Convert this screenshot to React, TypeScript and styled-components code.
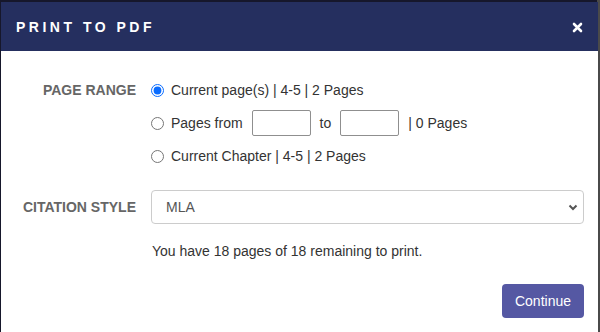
import { FC } from 'react';
import styled, { createGlobalStyle } from 'styled-components';

const GlobalStyle = createGlobalStyle`
    html, body {
        margin: 0;
        padding: 0;
        background: #16172b;
        font-family: 'Liberation Sans', Arial, sans-serif;
        overflow: hidden;
    }
`;

const Backdrop = styled.div`
    height: 332px;
    padding: 2px 3px 0 1px;
    background: linear-gradient(to right, #16172b 0, #16172b 597px, #4a4a4a 597px);
`;

const Modal = styled.div`
    width: 597px;
    height: 340px;
    background: #fff;
    display: flex;
    flex-direction: column;
`;

const Header = styled.div`
    height: 49px;
    background: #252f5f;
    display: flex;
    align-items: center;
    justify-content: space-between;
    padding: 1px 15px 0 15px;
    box-sizing: border-box;
`;

const Title = styled.h2`
    margin: 0;
    color: #fff;
    font-size: 14px;
    font-weight: 700;
    letter-spacing: 3.5px;
`;

const CloseButton = styled.button`
    border: 0;
    background: none;
    padding: 0;
    width: 11px;
    height: 11px;
    display: flex;
    cursor: pointer;
`;

const Body = styled.div`
    padding: 29px 14px 0 0;
    display: flex;
    flex-direction: column;
`;

const FieldRow = styled.div<{ $align?: string; $gapTop?: number }>`
    display: grid;
    grid-template-columns: 135px 1fr;
    column-gap: 15px;
    align-items: ${p => p.$align ?? 'center'};
    margin-top: ${p => p.$gapTop ?? 0}px;
`;

const FieldLabel = styled.div`
    text-align: right;
    font-size: 14px;
    font-weight: 700;
    color: #666;
    line-height: 20px;
`;

const Options = styled.div`
    display: flex;
    flex-direction: column;
    gap: 13px;
`;

const Option = styled.label`
    display: flex;
    align-items: center;
    height: 20px;
    font-size: 14px;
    color: #333;
    white-space: pre;
`;

const Radio = styled.input`
    margin: 0 7px 0 0;
    width: 13px;
    height: 13px;
    accent-color: #0a6cff;
`;

const PageInput = styled.input`
    width: 59px;
    height: 26px;
    box-sizing: border-box;
    border: 1px solid #8f8f8f;
    border-radius: 2px;
    margin: 0 9px;
    font-family: inherit;
`;

const SelectWrap = styled.div`
    position: relative;
    height: 34px;
`;

const Select = styled.select`
    width: 100%;
    height: 34px;
    appearance: none;
    border: 1px solid #ccc;
    border-radius: 4px;
    padding: 0 14px;
    font-size: 14px;
    color: #555;
    background: #fff;
    font-family: inherit;
`;

const Chevron = styled.svg`
    position: absolute;
    right: 6px;
    top: 14px;
    pointer-events: none;
`;

const Remaining = styled.p`
    margin: 19px 0 0 151px;
    font-size: 14px;
    color: #333;
`;

const Footer = styled.div`
    display: flex;
    justify-content: flex-end;
    margin-top: 25px;
`;

const PrimaryButton = styled.button`
    width: 82px;
    height: 34px;
    background: #5558a3;
    color: #fff;
    border: 0;
    border-radius: 4px;
    font-size: 14px;
    font-family: inherit;
`;

const PagesFromOption: FC = () => (
    <Option>
        <Radio type="radio" name="range" />
        <span>Pages from</span>
        <PageInput type="text" />
        <span>to</span>
        <PageInput type="text" />
        <span>| 0 Pages</span>
    </Option>
);

export default function App() {
    return (
        <>
            <GlobalStyle />
            <Backdrop>
                <Modal>
                    <Header>
                        <Title>PRINT TO PDF</Title>
                        <CloseButton aria-label="Close">
                            <svg width="11" height="11" viewBox="0 0 11 11">
                                <path d="M2 2 L9 9 M9 2 L2 9" stroke="#fff" strokeWidth="2.6" strokeLinecap="round" />
                            </svg>
                        </CloseButton>
                    </Header>
                    <Body>
                        <FieldRow $align="start">
                            <FieldLabel>PAGE RANGE</FieldLabel>
                            <Options>
                                <Option>
                                    <Radio type="radio" name="range" defaultChecked />
                                    <span>Current page(s) | 4-5 | 2 Pages</span>
                                </Option>
                                <PagesFromOption />
                                <Option>
                                    <Radio type="radio" name="range" />
                                    <span>Current Chapter | 4-5 | 2 Pages</span>
                                </Option>
                            </Options>
                        </FieldRow>
                        <FieldRow $gapTop={24}>
                            <FieldLabel>CITATION STYLE</FieldLabel>
                            <SelectWrap>
                                <Select defaultValue="MLA">
                                    <option>MLA</option>
                                    <option>APA</option>
                                    <option>Chicago</option>
                                </Select>
                                <Chevron width="10" height="7" viewBox="0 0 10 7">
                                    <path d="M1.5 1.5 L5 5 L8.5 1.5" stroke="#555" strokeWidth="2" fill="none" />
                                </Chevron>
                            </SelectWrap>
                        </FieldRow>
                        <Remaining>You have 18 pages of 18 remaining to print.</Remaining>
                        <Footer>
                            <PrimaryButton>Continue</PrimaryButton>
                        </Footer>
                    </Body>
                </Modal>
            </Backdrop>
        </>
    );
}
